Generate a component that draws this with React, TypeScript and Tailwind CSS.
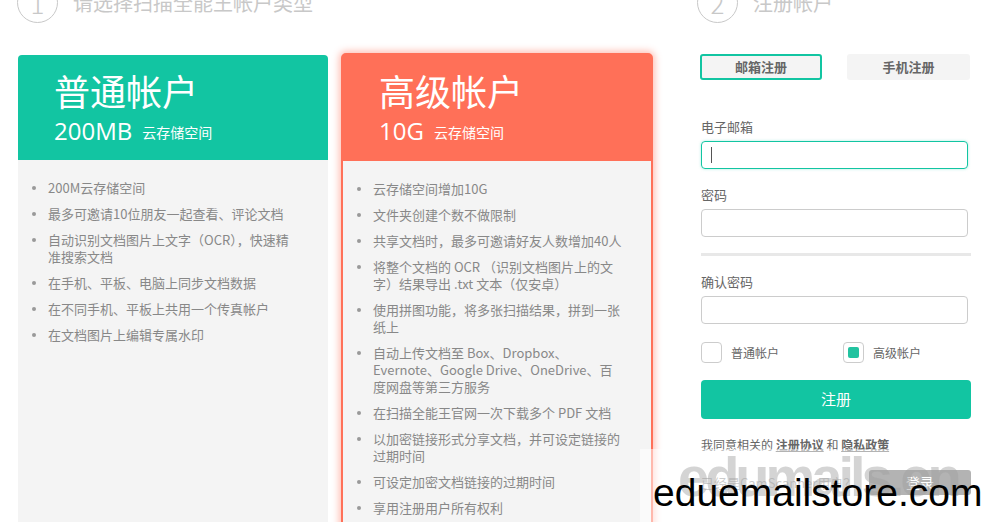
const GREEN = "#12c5a2";

const BASIC_ITEMS: string[][] = [
  ["200M云存储空间"],
  ["最多可邀请10位朋友一起查看、评论文档"],
  ["自动识别文档图片上文字（OCR），快速精", "准搜索文档"],
  ["在手机、平板、电脑上同步文档数据"],
  ["在不同手机、平板上共用一个传真帐户"],
  ["在文档图片上编辑专属水印"],
];

const PREMIUM_ITEMS: string[][] = [
  ["云存储空间增加10G"],
  ["文件夹创建个数不做限制"],
  ["共享文档时，最多可邀请好友人数增加40人"],
  ["将整个文档的 OCR （识别文档图片上的文", "字）结果导出 .txt 文本（仅安卓）"],
  ["使用拼图功能，将多张扫描结果，拼到一张", "纸上"],
  ["自动上传文档至 Box、Dropbox、", "Evernote、Google Drive、OneDrive、百", "度网盘等第三方服务"],
  ["在扫描全能王官网一次下载多个 PDF 文档"],
  ["以加密链接形式分享文档，并可设定链接的", "过期时间"],
  ["可设定加密文档链接的过期时间"],
  ["享用注册用户所有权利"],
];

function StepHeader({ num, title }: { num: string; title: string }) {
  return (
    <div className="flex h-[41px] items-center text-[#c8c8c8]">
      <div className="flex h-[41px] w-[41px] items-center justify-center rounded-full border border-[#c8c8c8] text-[26px] font-light">
        {num}
      </div>
      <span className="ml-[15px] text-[20px] leading-none">{title}</span>
    </div>
  );
}

function FeatureList({ items }: { items: string[][] }) {
  return (
    <ul className="pt-[19px]">
      {items.map((lines, i) => (
        <li key={i} className="mb-[9px] flex text-[13px] leading-[17px] text-[#888]">
          <span className="mt-[7px] h-[4px] w-[4px] shrink-0 rounded-full bg-[#999]" />
          <span className="ml-[12px] whitespace-nowrap">
            {lines.map((l, j) => (
              <span key={j} className="block">
                {l}
              </span>
            ))}
          </span>
        </li>
      ))}
    </ul>
  );
}

function Field({ label, active, first }: { label: string; active?: boolean; first?: boolean }) {
  return (
    <div className={first ? "mt-[38px]" : "mt-[17px]"}>
      <div className="text-[13px] leading-[17px] text-[#666]">{label}</div>
      <div
        className={`mt-[6px] flex h-[28px] w-[267px] items-center rounded-[4px] border ${
          active ? "border-[#12c5a2] shadow-[0_0_3px_rgba(18,197,162,0.35)]" : "border-[#ccc]"
        }`}
      >
        {active && <span className="ml-[9px] h-[16px] w-px bg-[#555]" />}
      </div>
    </div>
  );
}

function CardHead({ title, size }: { title: string; size: string }) {
  return (
    <>
      <div className="text-[36px] leading-[36px]">{title}</div>
      <div className="mt-[11px] flex items-center">
        <span className="font-['Open_Sans',sans-serif] text-[24px] leading-[24px]">{size}</span>
        <span className="ml-[10px] mt-[1px] text-[14px] leading-[14px]">云存储空间</span>
      </div>
    </>
  );
}

export default function App() {
  return (
    <div className="relative h-[522px] w-[992px] overflow-hidden bg-white font-['Noto_Sans_CJK_SC',sans-serif]">
      <div className="flex pl-[17px]">
        {/* left: account types */}
        <div className="w-[636px]">
          <div className="-mt-[18px]">
            <StepHeader num="1" title="请选择扫描全能王帐户类型" />
          </div>
          <div className="mt-[30px] flex items-start">
            <div className="ml-px mt-[2px] w-[310px] overflow-hidden rounded-t-[4px]">
              <div className="h-[105px] bg-[#12c5a2] pl-[36px] pt-[17px] text-white">
                <CardHead title="普通帐户" size="200MB" />
              </div>
              <div className="h-[400px] bg-[#f4f4f4] pl-[14px]">
                <FeatureList items={BASIC_ITEMS} />
              </div>
            </div>

            <div className="ml-[13px] w-[312px] rounded-[5px] border-2 border-[#ff7058] bg-[#ff7058] shadow-[0_0_7px_2px_rgba(255,112,88,0.45)]">
              <div className="h-[106px] pl-[36px] pt-[17px] text-white">
                <CardHead title="高级帐户" size="10G" />
              </div>
              <div className="h-[400px] bg-[#f4f4f4] pl-[14px]">
                <FeatureList items={PREMIUM_ITEMS} />
              </div>
            </div>
          </div>
        </div>

        {/* right: register form */}
        <div className="ml-[44px] w-[280px]">
          <div className="-mt-[18px]">
            <StepHeader num="2" title="注册帐户" />
          </div>
          <div className="pl-[4px]">
            <div className="mt-[31px] flex">
              <button className="-ml-px flex h-[26px] w-[122px] items-center justify-center rounded-[3px] border-2 border-[#12c5a2] bg-[#f4f4f4] text-[13px] font-bold text-[#666]">
                邮箱注册
              </button>
              <button className="ml-[25px] flex h-[26px] w-[123px] items-center justify-center rounded-[3px] bg-[#f4f4f4] text-[13px] font-bold text-[#666]">
                手机注册
              </button>
            </div>

            <Field label="电子邮箱" active first />
            <Field label="密码" />
            <div className="mt-[16px] h-[3px] w-[270px] bg-[#e8e8e8]" />
            <Field label="确认密码" />

            <div className="mt-[18px] flex items-center text-[12px] text-[#666]">
              <span className="h-[21px] w-[21px] rounded-[4px] border border-[#ccc]" />
              <span className="ml-[9px] w-[112px]">普通帐户</span>
              <span className="flex h-[21px] w-[21px] items-center justify-center rounded-[4px] border border-[#ccc]">
                <span className="h-[11px] w-[11px] rounded-[2px] bg-[#22c3a0]" />
              </span>
              <span className="ml-[9px]">高级帐户</span>
            </div>

            <button
              className="mt-[17px] flex h-[39px] w-[270px] items-center justify-center rounded-[4px] text-[15px] text-white"
              style={{ backgroundColor: GREEN }}
            >
              注册
            </button>

            <div className="mt-[18px] text-[12px] leading-[16px] text-[#666]">
              我同意相关的 <span className="font-bold underline">注册协议</span> 和{" "}
              <span className="font-bold underline">隐私政策</span>
            </div>

            <div className="mt-[17px] flex w-[270px] items-center justify-between">
              <span className="text-[13px] text-[#999]">已经是CamScanner用户？</span>
              <span className="flex h-[25px] w-[102px] items-center justify-center rounded-[3px] bg-[#666] text-[14px] text-white">
                登录
              </span>
            </div>
          </div>
        </div>
      </div>

      {/* watermark overlay */}
      <div className="absolute bottom-0 left-[640px] right-0 top-[449px] bg-white/50">
        <span className="absolute left-[38px] top-[-14px] font-['Liberation_Sans',sans-serif] text-[56px] font-bold tracking-[-4px] text-[rgba(160,160,160,0.45)]">
          edumails.cn
        </span>
        <span className="absolute left-[13px] top-[24px] font-['Liberation_Sans',sans-serif] text-[39px] leading-[40px] text-black">
          eduemailstore.com
        </span>
      </div>
    </div>
  );
}
